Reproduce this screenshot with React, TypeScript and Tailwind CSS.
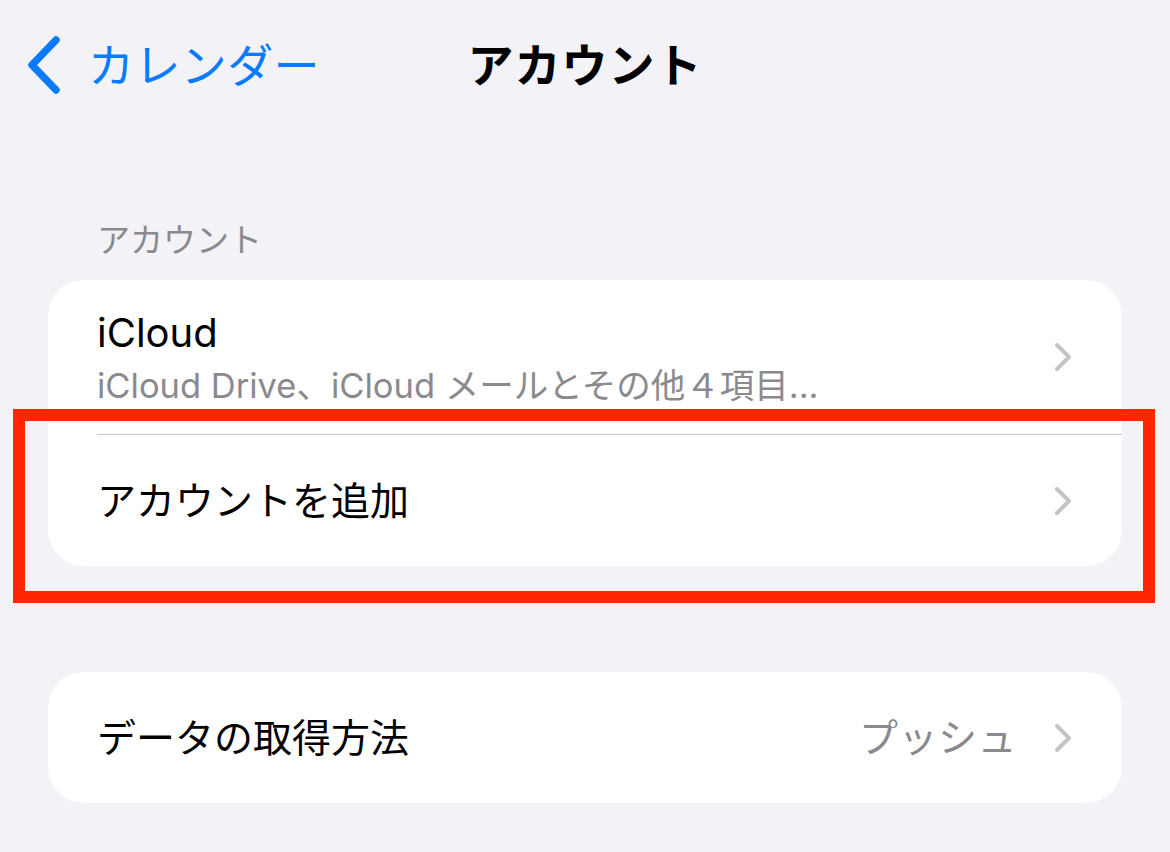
import React from 'react';

const Chevron = () => (
  <svg width="18" height="30" viewBox="0 0 18 30" fill="none" className="shrink-0">
    <path d="M3 3 L15 15 L3 27" stroke="#c4c4c7" strokeWidth="4" strokeLinecap="round" strokeLinejoin="round" />
  </svg>
);

const BackChevron = () => (
  <svg width="36" height="60" viewBox="0 0 36 60" fill="none">
    <path d="M30 5 L6 30 L30 55" stroke="#0a7aff" strokeWidth="7.5" strokeLinecap="round" strokeLinejoin="round" />
  </svg>
);

const App: React.FC = () => {
  return (
    <div className="relative w-[1170px] min-h-[852px] bg-[#f2f2f7] font-['Inter','Noto_Sans_CJK_JP',sans-serif] text-black">
      {/* nav bar */}
      <div className="grid h-[130px] grid-cols-[1fr_auto_1fr] items-center">
        <div className="flex items-center pl-[26px]">
          <BackChevron />
          <span className="ml-[26px] text-[46px] leading-none tracking-[0.4px] text-[#0a7aff]">カレンダー</span>
        </div>
        <div className="text-[46px] font-bold leading-none tracking-[1px]">アカウント</div>
        <div />
      </div>

      {/* section header */}
      <div className="pt-[90px] pl-[97px] text-[33px] leading-[40px] text-[#8a8a8e]">アカウント</div>

      {/* accounts card */}
      <div className="mx-[48px] mt-[20px] rounded-[36px] bg-white">
        <div className="flex h-[154px] items-center pl-[49px] pr-[50px]">
          <div className="flex-1">
            <div className="text-[40px] leading-[48px]">iCloud</div>
            <div className="mt-[9px] text-[34.5px] leading-[40px] text-[#8a8a8e]">
              iCloud Drive、iCloud メールとその他４項目...
            </div>
          </div>
          <Chevron />
        </div>
        <div className="ml-[49px] h-px bg-[#c8c8cc]" />
        <div className="flex h-[131px] items-center pl-[49px] pr-[50px]">
          <div className="flex-1 text-[39px] leading-none">アカウントを追加</div>
          <Chevron />
        </div>
      </div>

      {/* fetch card */}
      <div className="mx-[48px] mt-[106px] rounded-[36px] bg-white">
        <div className="flex h-[131px] items-center pl-[49px] pr-[50px]">
          <div className="flex-1 text-[39px] leading-none">データの取得方法</div>
          <span className="mr-[37px] text-[39px] leading-none tracking-[0.5px] text-[#8a8a8e]">プッシュ</span>
          <Chevron />
        </div>
      </div>

      {/* red highlight box */}
      <div className="absolute left-[13px] top-[409px] h-[194px] w-[1142px] border-[12px] border-[#ff2600]" />
    </div>
  );
};

export default App;
